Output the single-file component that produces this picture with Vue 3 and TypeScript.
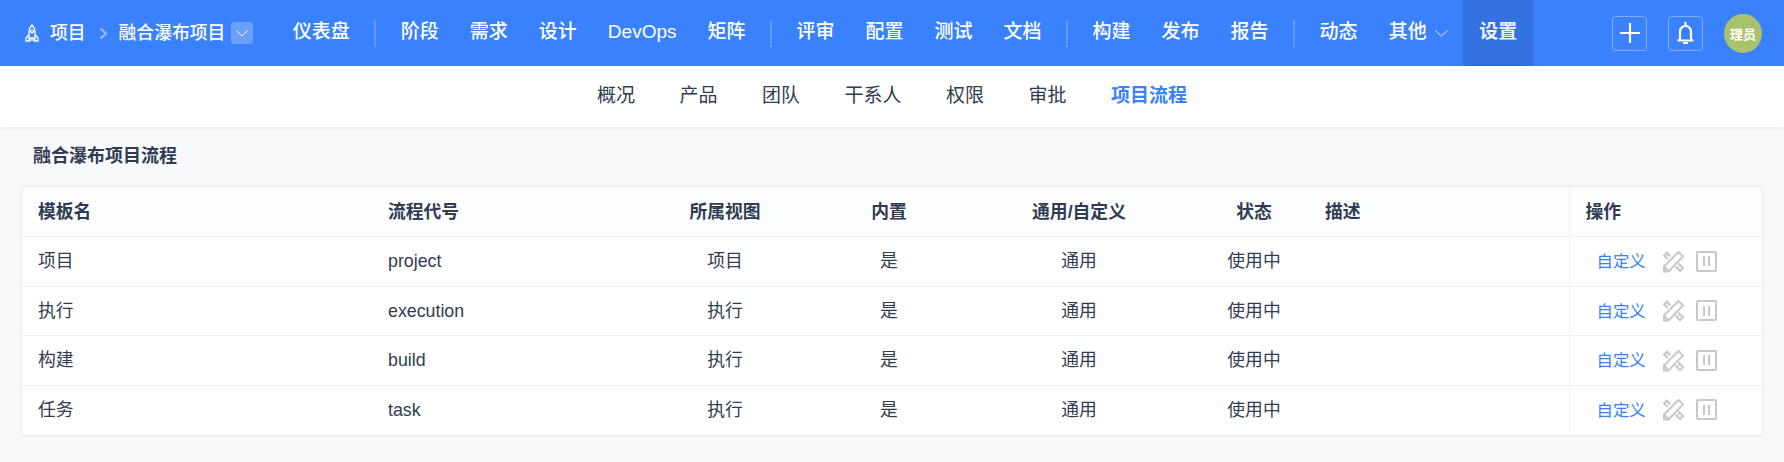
<template>
  <div class="page">
    <!-- Top navigation -->
    <header class="topbar">
      <div class="crumb">
        <svg class="rocket" width="14" height="18" viewBox="0 0 14 18" fill="none" stroke="#fff" stroke-width="1.3">
          <path d="M7 1C5 3 4 5.500 4 8.500V14h6V8.500C10 5.500 9 3 7 1Z" />
          <circle cx="7" cy="7.500" r="1.400" />
          <path d="M4 10.500 1 14v3h3.500L4 14M10 10.500l3 3.500v3H9.500l.5-3" />
          <path d="M6 14v3M8 14v3" />
        </svg>
        <span class="crumb-text">项目</span>
        <svg class="crumb-sep" width="9" height="13" viewBox="0 0 9 13" fill="none" stroke="#9dc0fd" stroke-width="2">
          <path d="M1.500 1.500 7 6.500l-5.500 5" />
        </svg>
        <span class="crumb-text">融合瀑布项目</span>
        <span class="crumb-drop">
          <svg width="12" height="7" viewBox="0 0 12 7" fill="none" stroke="#fff" stroke-width="1">
            <path d="M.5.5 6 6l5.500-5.500" />
          </svg>
        </span>
      </div>

      <nav class="menu">
        <template v-for="(group, i) in menuGroups" :key="i">
          <span v-if="i > 0" class="menu-divider"></span>
          <a
            v-for="item in group"
            :key="item"
            class="menu-item"
            :class="{ active: item === '设置' }"
          >
            <span class="menu-label">{{ item }}</span>
            <svg v-if="item === '其他'" class="menu-caret" width="13" height="7" viewBox="0 0 13 7" fill="none" stroke="#dbe8ff" stroke-width="1">
              <path d="M.5.5 6.500 6l6-5.500" />
            </svg>
          </a>
        </template>
      </nav>

      <div class="tools">
        <button class="tool-btn">
          <svg width="20" height="20" viewBox="0 0 20 20" fill="none" stroke="#fff" stroke-width="2.200">
            <path d="M10 0v20M0 10h20" />
          </svg>
        </button>
        <button class="tool-btn">
          <svg width="17" height="22" viewBox="0 0 17 22" fill="none" stroke="#fff" stroke-width="2.200">
            <path d="M3 17V9.500a5.500 5.500 0 0 1 11 0V17l1.500 1.500h-14L3 17Z" stroke-linejoin="round" />
            <path d="M8.500 0v4" />
            <path d="M6 21h5" />
          </svg>
        </button>
        <span class="avatar">理员</span>
      </div>
    </header>

    <!-- Secondary navigation -->
    <nav class="subnav">
      <a
        v-for="tab in tabs"
        :key="tab"
        class="subnav-item"
        :class="{ active: tab === '项目流程' }"
      >{{ tab }}</a>
    </nav>

    <main class="content">
      <h2 class="title">融合瀑布项目流程</h2>

      <div class="card">
        <table class="flow-table">
          <colgroup>
            <col class="c-name" />
            <col class="c-code" />
            <col class="c-view" />
            <col class="c-built" />
            <col class="c-type" />
            <col class="c-status" />
            <col class="c-desc" />
            <col class="c-ops" />
          </colgroup>
          <thead>
            <tr>
              <th>模板名</th>
              <th>流程代号</th>
              <th class="center">所属视图</th>
              <th class="center">内置</th>
              <th class="center">通用/自定义</th>
              <th class="center">状态</th>
              <th>描述</th>
              <th class="ops">操作</th>
            </tr>
          </thead>
          <tbody>
            <tr v-for="row in rows" :key="row.code">
              <td>{{ row.name }}</td>
              <td>{{ row.code }}</td>
              <td class="center">{{ row.view }}</td>
              <td class="center">是</td>
              <td class="center">通用</td>
              <td class="center">使用中</td>
              <td></td>
              <td class="ops">
                <div class="ops-row">
                  <a class="link">自定义</a>
                  <svg width="23" height="23" viewBox="0 0 23 23" fill="none" stroke="#c8c8c8" stroke-width="2">
                    <!-- pencil across, ruler broken behind it -->
                    <path d="M2 21.500V16.500L16.500 2l4.500 4.500L6.500 21.500H2Z" />
                    <path d="M2 16.500l4.500 5" />
                    <path d="M8.500 6.500 5 2.500 2 5.500l4 3.500" />
                    <path d="M16.500 13.500l4.500 4.500-3 3-4.500-4.500" />
                    <path d="M5 5.500l1.500-1.500M16 17l1.500-1.500" stroke-width="1.500" />
                  </svg>
                  <span class="pause">
                    <svg width="9" height="10" viewBox="0 0 9 10" fill="#c8c8c8">
                      <rect x="1" width="2" height="10" />
                      <rect x="6" width="2" height="10" />
                    </svg>
                  </span>
                </div>
              </td>
            </tr>
          </tbody>
        </table>
      </div>
    </main>
  </div>
</template>

<script setup lang="ts">
interface FlowRow {
  name: string
  code: string
  view: string
}

const menuGroups: string[][] = [
  ['仪表盘'],
  ['阶段', '需求', '设计', 'DevOps', '矩阵'],
  ['评审', '配置', '测试', '文档'],
  ['构建', '发布', '报告'],
  ['动态', '其他', '设置']
]

const tabs = ['概况', '产品', '团队', '干系人', '权限', '审批', '项目流程']

const rows: FlowRow[] = [
  { name: '项目', code: 'project', view: '项目' },
  { name: '执行', code: 'execution', view: '执行' },
  { name: '构建', code: 'build', view: '执行' },
  { name: '任务', code: 'task', view: '执行' }
]
</script>

<style>
html,
body {
  margin: 0;
  background: #f8f9fb;
}
</style>

<style scoped>
.page {
  min-height: 462px;
  background: #f8f9fb;
  font-family: "Liberation Sans", "Noto Sans CJK SC", sans-serif;
  color: #313c52;
}

.topbar {
  display: flex;
  align-items: center;
  height: 66px;
  padding: 0 22px 0 25px;
  background: #3a82fd;
  color: #fff;
}

.crumb {
  display: flex;
  align-items: center;
  flex: none;
  font-size: 17.800px;
  line-height: 24px;
  font-weight: 500;
}

.rocket {
  margin-right: 11px;
}

.crumb-sep {
  margin: 0 11px 0 13px;
}

.crumb-drop {
  display: flex;
  align-items: center;
  justify-content: center;
  width: 22px;
  height: 22px;
  margin-left: 6px;
  border-radius: 3px;
  background: #6ba1fd;
}

.menu {
  display: flex;
  align-items: center;
  height: 100%;
  flex: 1;
  margin-left: 24px;
}

.menu-item {
  display: flex;
  align-items: center;
  height: 100%;
  padding: 0 15.500px;
  font-size: 19px;
  line-height: 24px;
  font-weight: 500;
  white-space: nowrap;
}

.menu-label {
  position: relative;
  top: -1px;
}

.menu-item.active {
  padding: 0 16px;
  background: #3172e0;
  color: #eef0f4;
  font-weight: 700;
}

.menu-caret {
  margin-left: 8px;
}

.menu-divider {
  width: 2px;
  height: 27px;
  margin: 0 9px;
  background: #5f99fc;
}

.tools {
  display: flex;
  align-items: center;
  gap: 21px;
  flex: none;
}

.tool-btn {
  display: flex;
  align-items: center;
  justify-content: center;
  width: 35px;
  height: 35px;
  padding: 0;
  border: 1px solid #7fabfb;
  border-radius: 4px;
  background: transparent;
}

.avatar {
  display: flex;
  align-items: center;
  justify-content: center;
  width: 38px;
  height: 39px;
  border-radius: 50%;
  background: #a8c26e;
  font-size: 13px;
  font-weight: 700;
}

.subnav {
  display: flex;
  justify-content: center;
  align-items: center;
  gap: 44.500px;
  height: 61px;
  padding-bottom: 2px;
  box-sizing: border-box;
  background: #fff;
  box-shadow: 0 1px 6px rgba(40, 50, 70, 0.08);
  position: relative;
}

.subnav-item {
  font-size: 19px;
  line-height: 24px;
  color: #313c52;
}

.subnav-item.active {
  color: #3a82fd;
  font-weight: 700;
}

.content {
  padding: 0 22px;
}

.title {
  margin: 0;
  padding: 17px 0 0 11px;
  height: 43px;
  font-size: 18px;
  line-height: 24px;
  font-weight: 700;
  color: #313c52;
}

.card {
  padding-bottom: 1px;
  border-radius: 4px;
  background: #fff;
  box-shadow: 0 0 3px rgba(40, 50, 70, 0.14);
  overflow: hidden;
}

.flow-table {
  width: 100%;
  border-collapse: collapse;
  table-layout: fixed;
  font-size: 17.800px;
  line-height: 24px;
}

.c-name { width: 350px; }
.c-code { width: 259px; }
.c-view { width: 188px; }
.c-built { width: 140px; }
.c-type { width: 240px; }
.c-status { width: 110px; }
.c-desc { width: 260px; }
.c-ops { width: 193px; }

.flow-table th,
.flow-table td {
  padding: 0 16px;
  text-align: left;
  border-bottom: 1px solid #eef0f5;
}

.flow-table tr:last-child td {
  border-bottom: none;
}

.flow-table th {
  height: 49px;
  background: #fcfdff;
  font-weight: 700;
}

.flow-table td {
  height: 48.500px;
  font-weight: 400;
}

.flow-table .center {
  text-align: center;
}

.flow-table .ops {
  border-left: 1px solid #eef0f5;
}

.ops-row {
  display: flex;
  align-items: center;
  padding-left: 11px;
}

.link {
  color: #3a82fd;
  font-size: 16.400px;
  white-space: nowrap;
  margin-right: 16px;
}

.pause {
  display: flex;
  align-items: center;
  justify-content: center;
  width: 21px;
  height: 21px;
  margin-left: 11px;
  box-sizing: border-box;
  border: 2px solid #c8c8c8;
  border-radius: 2px;
}
</style>
